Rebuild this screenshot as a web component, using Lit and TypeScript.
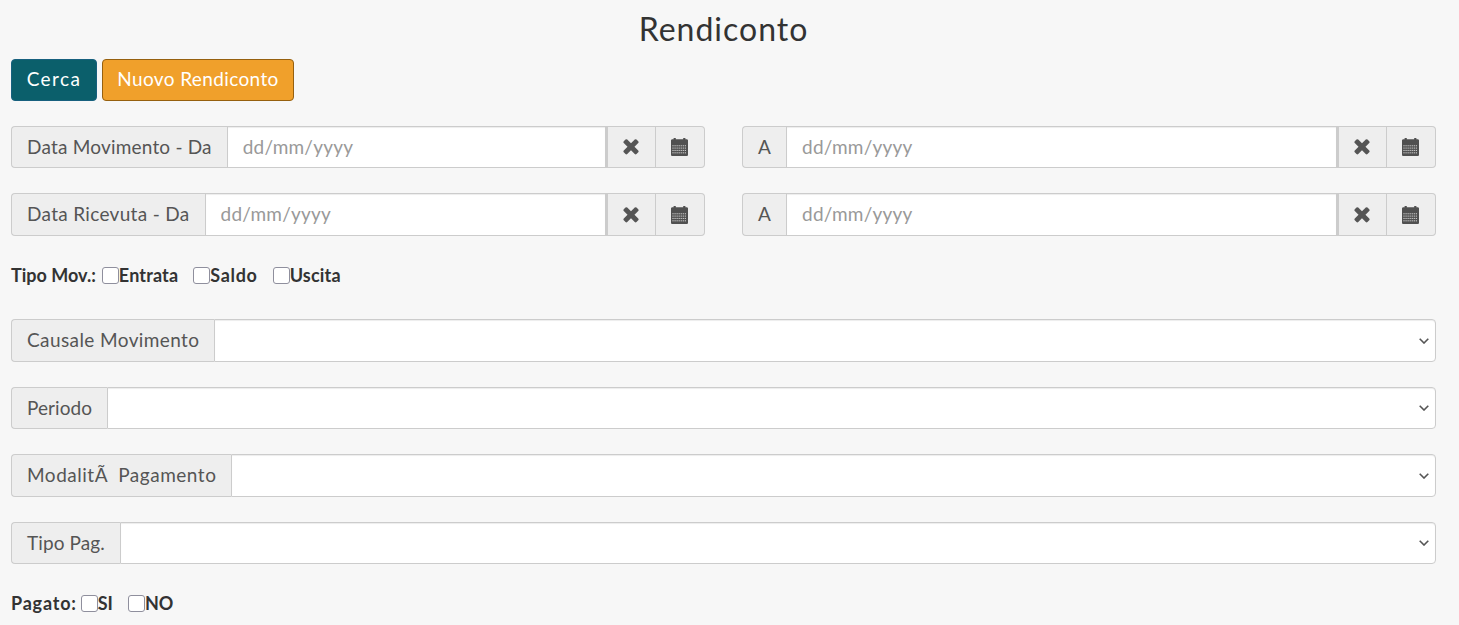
import { LitElement, html, css, svg } from "lit";
import { customElement } from "lit/decorators.js";

const times = html`<svg class="ico-x" viewBox="0 0 1408 1408" aria-hidden="true"><path d="M1298 1050q0 40-28 68l-136 136q-28 28-68 28t-68-28l-294-294-294 294q-28 28-68 28t-68-28l-136-136q-28-28-28-68t28-68l294-294-294-294q-28-28-28-68t28-68l136-136q28-28 68-28t68 28l294 294 294-294q28-28 68-28t68 28l136 136q28 28 28 68t-28 68l-294 294 294 294q28 28 28 68z"/></svg>`;

const cells: unknown[] = [];
for (let r = 0; r < 4; r++) {
  for (let c = 0; c < 7; c++) {
    cells.push(svg`<rect x="${1.5 + c * 2.05}" y="${7.2 + r * 2.35}" width="1" height="1.1" fill="#e4e4e4"/>`);
  }
}
const cal = html`<svg class="ico-cal" viewBox="0 0 17 18" aria-hidden="true">
  <path fill="#505050" d="M1.3 1.2H2.600V0h2.200v1.200h7.400V0h2.200v1.200h1.300c.7 0 1.300.6 1.300 1.300v14.200c0 .7-.6 1.300-1.300 1.300H1.300C.6 18 0 17.400 0 16.700V2.500c0-.7.6-1.300 1.300-1.300z"/>
  ${cells}
</svg>`;

const chevron = html`<svg class="chev" viewBox="0 0 10 6" aria-hidden="true"><path d="M.7.7 5 5l4.300-4.300" fill="none" stroke="#555" stroke-width="1.600"/></svg>`;

@customElement("app-root")
export class AppRoot extends LitElement {
  static styles = css`
    :host {
      display: block;
      min-height: 625px;
      box-sizing: border-box;
      padding: 0 23px 0 11px;
      background: #f7f7f7;
      color: #333;
      font-family: "Lato", "Liberation Sans", sans-serif;
      font-size: 19px;
      overflow: hidden;
    }
    * { box-sizing: border-box; }
    h1 {
      margin: 0;
      height: 59px;
      padding-top: 9px;
      text-align: center;
      font-weight: 400;
      font-size: 32px;
      line-height: 40px;
      letter-spacing: 1px;
    }
    .actions { display: flex; gap: 5px; margin-bottom: 24.75px; }
    .btn {
      height: 42px;
      padding: 0 0 4px;
      border: 1px solid;
      border-radius: 4px;
      font: inherit;
      color: #fff;
    }
    .teal { background: #0b5f6b; border-color: #17607e; width: 86px; letter-spacing: 1.4px; }
    .orange { background: #f0a02b; border-color: #96600f; width: 192px; letter-spacing: .37px; }
    .dates { display: grid; grid-template-columns: 1fr 1fr; column-gap: 37px; row-gap: 25px; }
    .group { display: flex; height: 42.5px; }
    .group.full { margin-bottom: 25px; }
    .addon {
      display: flex;
      align-items: center;
      padding: 0 15px 2px;
      background: #eee;
      border: 1px solid #ccc;
      color: #555;
      white-space: nowrap;
    }
    .addon:first-child { border-radius: 4px 0 0 4px; border-right: 0; }
    .field {
      flex: 1;
      min-width: 0;
      height: 100%;
      padding: 0 15px 2px;
      background: #fff;
      border: 1px solid #ccc;
      box-shadow: inset 0 1px 1px rgba(0,0,0,.075);
      font: inherit;
      letter-spacing: .2px;
      color: #555;
      outline: none;
    }
    .field::placeholder { color: #999; opacity: 1; }
    .select-wrap { flex: 1; min-width: 0; position: relative; display: flex; }
    select.field { border-radius: 0 4px 4px 0; appearance: none; -webkit-appearance: none; }
    .chev { position: absolute; right: 7px; top: 18.5px; width: 10px; height: 6px; pointer-events: none; }
    .tool {
      width: 49px;
      flex: none;
      display: flex;
      align-items: center;
      justify-content: center;
      padding-right: 2px;
      background: #eee;
      border: 1px solid #ccc;
      border-left: 0;
    }
    .tool.first { border-left: 2px solid #ccc; width: 50px; }
    .tool.last { border-radius: 0 4px 4px 0; }
    .ico-x { width: 18px; height: 18px; fill: #555; }
    .ico-cal { width: 17px; height: 18px; }
    .checks {
      display: flex;
      align-items: center;
      font-weight: 700;
      height: 24px;
      font-size: 18px;
    }
    .checks.mov { margin: 27.5px 0 32px; }
    .checks.pay { margin-top: 27px; }
    .checks .lead { margin-right: 6px; }
    .checks.pay .lead { margin-right: 4px; letter-spacing: .8px; }
    .check { display: flex; align-items: center; margin-right: 15px; }
    .check input {
      appearance: none;
      -webkit-appearance: none;
      width: 17px;
      height: 17px;
      margin: 0;
      background: #fff;
      border: 1px solid #8f8f9d;
      border-radius: 3px;
    }
  `;

  private dateGroup(label: string, spacing: number) {
    return html`<div class="group">
      <span class="addon" style="letter-spacing:${spacing}px">${label}</span>
      <input class="field" type="text" placeholder="dd/mm/yyyy" />
      <span class="tool first">${times}</span>
      <span class="tool last">${cal}</span>
    </div>`;
  }

  private selectGroup(label: string, spacing: number) {
    return html`<div class="group full">
      <span class="addon" style="letter-spacing:${spacing}px">${label}</span>
      <span class="select-wrap"><select class="field"><option></option></select>${chevron}</span>
    </div>`;
  }

  private check(label: string, spacing = 0) {
    return html`<label class="check" style="letter-spacing:${spacing}px"><input type="checkbox" />${label}</label>`;
  }

  render() {
    return html`
      <h1>Rendiconto</h1>
      <div class="actions">
        <button class="btn teal">Cerca</button>
        <button class="btn orange">Nuovo Rendiconto</button>
      </div>
      <div class="dates">
        ${this.dateGroup("Data Movimento - Da", 0.2)}
        ${this.dateGroup("A", 0.2)}
        ${this.dateGroup("Data Ricevuta - Da", 0.32)}
        ${this.dateGroup("A", 0.2)}
      </div>
      <div class="checks mov">
        <span class="lead">Tipo Mov.:</span>
        ${this.check("Entrata", 0.15)}${this.check("Saldo", 0.7)}${this.check("Uscita", 0.2)}
      </div>
      ${this.selectGroup("Causale Movimento", 0.4)}
      ${this.selectGroup("Periodo", 0.07)}
      ${this.selectGroup("ModalitÃ\u00a0 Pagamento", 0.52)}
      ${this.selectGroup("Tipo Pag.", 0.1)}
      <div class="checks pay">
        <span class="lead">Pagato:</span>
        ${this.check("SI")}${this.check("NO")}
      </div>
    `;
  }
}
